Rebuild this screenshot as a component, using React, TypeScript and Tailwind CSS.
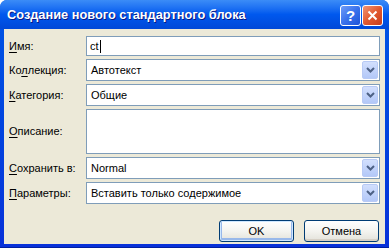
import React from 'react';

const font = { fontFamily: '"Liberation Sans", Arial, sans-serif' };

const Label: React.FC<{ pre?: string; u: string; rest: string }> = ({ pre = '', u, rest }) => (
  <span className="text-[11px] leading-none text-black whitespace-nowrap">
    {pre}
    <span className="underline underline-offset-2">{u}</span>
    {rest}
  </span>
);

const Chevron: React.FC = () => (
  <svg width="9" height="6" viewBox="0 0 9 6">
    <path d="M1 1 L4.5 4.5 L8 1" fill="none" stroke="#4D6185" strokeWidth="2" />
  </svg>
);

const Combo: React.FC<{ value: string }> = ({ value }) => (
  <div className="h-[22px] border border-[#7F9DB9] bg-white flex items-center">
    <span className="flex-1 pl-[4px] text-[11px] text-black leading-none">{value}</span>
    <div className="w-[16px] h-[18px] mr-[1px] rounded-[2px] border border-[#B8CAF5] bg-gradient-to-b from-[#D2DFFD] to-[#B3C8F8] flex items-center justify-center">
      <Chevron />
    </div>
  </div>
);

const Row: React.FC<{ label: React.ReactNode; children: React.ReactNode }> = ({ label, children }) => (
  <div className="flex items-center text-[11px] leading-none">
    <div className="w-[77px] shrink-0 leading-none">{label}</div>
    <div className="flex-1">{children}</div>
  </div>
);

const XpButton: React.FC<{ text: string; def?: boolean }> = ({ text, def }) => (
  <div
    className={
      'w-[75px] h-[22px] rounded-[3px] border border-[#003C74] flex items-center justify-center text-[11px] leading-none text-black bg-gradient-to-b from-[#FFFFFF] via-[#F4F4F0] to-[#E3E2DA] ' +
      (def ? 'shadow-[inset_0_0_0_1px_#CEE7FF,inset_0_-1px_0_2px_#98B8EA]' : 'shadow-[inset_0_-2px_0_0_#D6D0C5]')
    }
  >
    {text}
  </div>
);

export default function App() {
  return (
    <div className="w-[389px] h-[248px] bg-white" style={font}>
      <div className="w-full h-full rounded-t-[7px] bg-gradient-to-b from-[#0055E5] to-[#0831D9] flex flex-col overflow-hidden border-b border-[#001EA0]">
        {/* title bar */}
        <div className="h-[29px] shrink-0 flex items-center pl-[7px] pr-[6px] bg-gradient-to-b from-[#3B8CF7] via-[#0058EE] to-[#0048D8]">
          <span className="flex-1 text-[12.8px] font-bold text-white [text-shadow:1px_1px_0_#0A1883] whitespace-nowrap">
            Создание нового стандартного блока
          </span>
          <div className="flex gap-[1px] mt-[1px]">
            <div className="w-[21px] h-[21px] rounded-[3px] border border-white bg-gradient-to-br from-[#6E9CF7] via-[#3A72EC] to-[#1E52D8] flex items-center justify-center">
              <span className="text-white font-bold text-[15px] leading-none">?</span>
            </div>
            <div className="w-[21px] h-[21px] rounded-[3px] border border-white bg-gradient-to-br from-[#F09474] via-[#E2592F] to-[#C73C1C] flex items-center justify-center">
              <svg width="11" height="11" viewBox="0 0 11 11">
                <path d="M1.5 1.5 L9.5 9.5 M9.5 1.5 L1.5 9.5" stroke="white" strokeWidth="2" />
              </svg>
            </div>
          </div>
        </div>
        {/* client */}
        <div className="flex-1 mx-[4px] mb-[3px] bg-[#ECE9D8] pt-[7px] pl-[5px] pr-[5px] flex flex-col gap-[3px]">
          <Row label={<Label u="И" rest="мя:" />}>
            <div className="h-[20px] border border-[#7F9DB9] bg-white flex items-center pl-[3px] text-[11px] text-black leading-none">
              ct<span className="inline-block w-[1px] h-[13px] bg-black ml-[1px]" />
            </div>
          </Row>
          <Row label={<Label pre="Ко" u="л" rest="лекция:" />}>
            <Combo value="Автотекст" />
          </Row>
          <Row label={<Label u="К" rest="атегория:" />}>
            <Combo value="Общие" />
          </Row>
          <Row label={<Label u="О" rest="писание:" />}>
            <div className="h-[45px] border border-[#7F9DB9] bg-white" />
          </Row>
          <Row label={<Label u="С" rest="охранить в:" />}>
            <Combo value="Normal" />
          </Row>
          <Row label={<Label u="П" rest="араметры:" />}>
            <Combo value="Вставить только содержимое" />
          </Row>
          <div className="flex justify-end gap-[10px] mt-[13px] pr-[1px]">
            <XpButton text="OK" def />
            <XpButton text="Отмена" />
          </div>
        </div>
      </div>
    </div>
  );
}
